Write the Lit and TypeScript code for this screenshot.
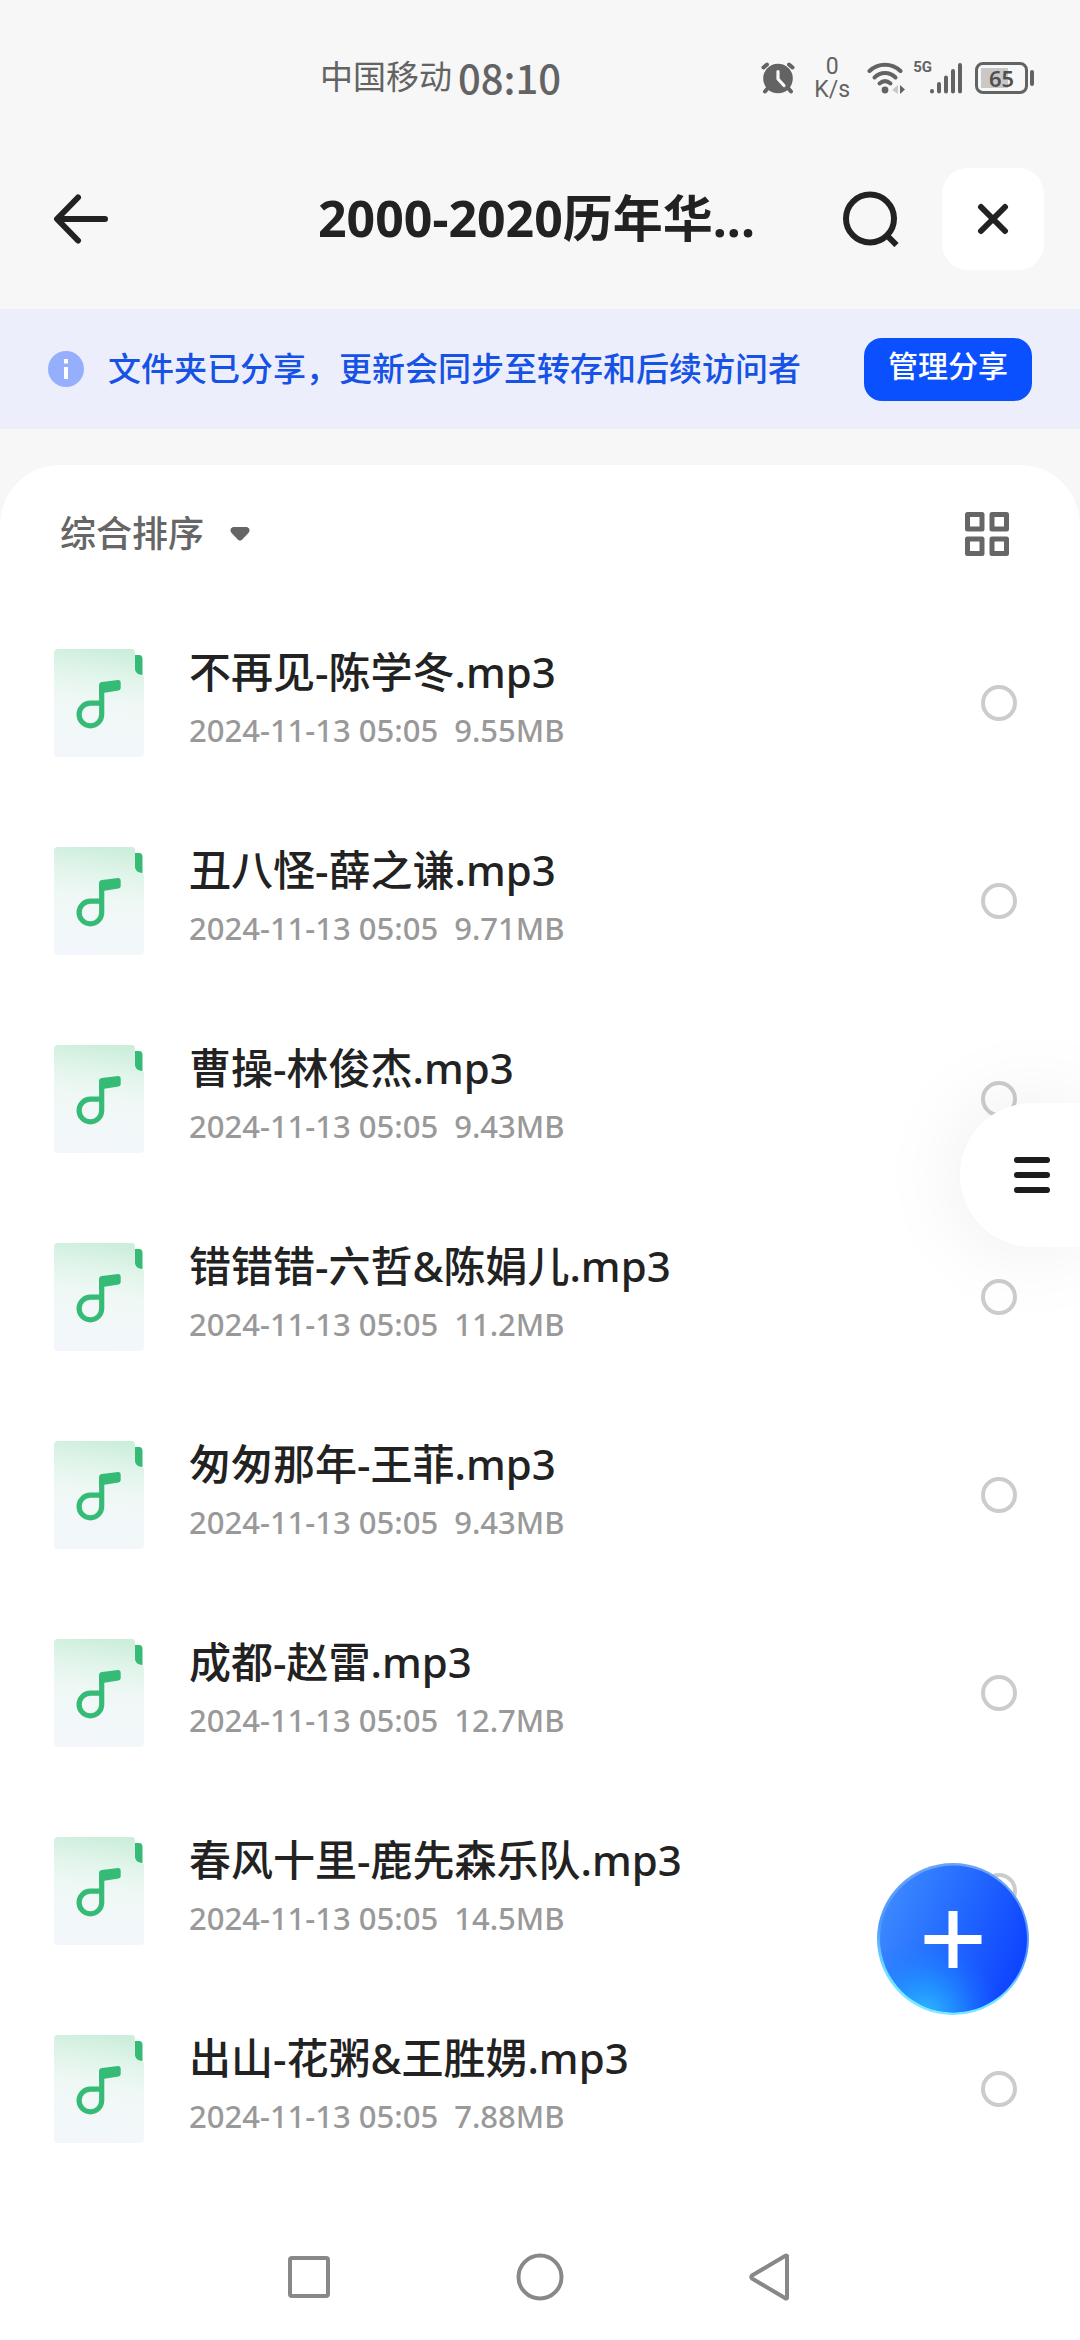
import { LitElement, html, css } from "lit";
import { customElement, property } from "lit/decorators.js";

interface Track {
  name: string;
  date: string;
  size: string;
}

const TRACKS: Track[] = [
  { name: "不再见-陈学冬.mp3", date: "2024-11-13 05:05", size: "9.55MB" },
  { name: "丑八怪-薛之谦.mp3", date: "2024-11-13 05:05", size: "9.71MB" },
  { name: "曹操-林俊杰.mp3", date: "2024-11-13 05:05", size: "9.43MB" },
  { name: "错错错-六哲&陈娟儿.mp3", date: "2024-11-13 05:05", size: "11.2MB" },
  { name: "匆匆那年-王菲.mp3", date: "2024-11-13 05:05", size: "9.43MB" },
  { name: "成都-赵雷.mp3", date: "2024-11-13 05:05", size: "12.7MB" },
  { name: "春风十里-鹿先森乐队.mp3", date: "2024-11-13 05:05", size: "14.5MB" },
  { name: "出山-花粥&王胜娚.mp3", date: "2024-11-13 05:05", size: "7.88MB" },
];

const shared = css`
  * {
    box-sizing: border-box;
  }
  svg {
    display: block;
    flex: none;
  }
  button {
    display: flex;
    align-items: center;
    justify-content: center;
    margin: 0;
    padding: 0;
    border: 0;
    background: none;
    color: inherit;
    font: inherit;
  }
`;

@customElement("status-bar")
export class StatusBar extends LitElement {
  static styles = [
    shared,
    css`
      :host {
        display: flex;
        align-items: center;
        height: 129px;
        padding: 27px 46px 0 320px;
        color: #636363;
      }
      .left {
        display: flex;
        align-items: center;
        gap: 6px;
        padding-bottom: 2px;
        line-height: 40px;
      }
      .carrier {
        font-size: 33px;
      }
      .clock {
        font-family: "Noto Sans CJK SC", sans-serif;
        font-size: 40px;
        font-weight: 500;
      }
      .icons {
        display: flex;
        align-items: center;
        margin-left: auto;
      }
      .speed {
        display: flex;
        flex-direction: column;
        align-items: center;
        width: 36px;
        margin: 0 17px 0 19px;
        font-family: Roboto, sans-serif;
        font-size: 23px;
        line-height: 23px;
      }
      .network {
        align-self: flex-start;
        margin: 0 -3px 0 8px;
        font-family: Roboto, sans-serif;
        font-size: 15px;
        font-weight: 700;
        line-height: 24px;
      }
      .battery {
        display: flex;
        align-items: center;
        justify-content: center;
        width: 53px;
        height: 32px;
        margin-left: 12px;
        border: 3px solid #636363;
        border-radius: 8px;
        background: linear-gradient(#c8c8c8, #c8c8c8) 3px center / 27px 20px no-repeat;
        color: #505050;
        font-size: 22px;
        font-weight: 600;
        line-height: 26px;
      }
      .knob {
        width: 4px;
        height: 16px;
        margin-left: 2px;
        border-radius: 2px;
        background: #636363;
      }
    `,
  ];

  render() {
    return html`
      <div class="left"><span class="carrier">中国移动</span><span class="clock">08:10</span></div>
      <div class="icons">
        <svg width="34" height="32" viewBox="0 0 34 32" aria-hidden="true">
          <path d="M2.500 5.500 L6 2.500 M31.500 5.500 L28 2.500 M7 26 L4 29.500 M27 26 L30 29.500" stroke="#636363" stroke-width="4" stroke-linecap="round" />
          <circle cx="17" cy="16.500" r="14.800" fill="#636363" />
          <path d="M17 9.500 V17 L23 23.500" fill="none" stroke="#f7f7f7" stroke-width="3.200" stroke-linecap="round" stroke-linejoin="round" />
        </svg>
        <div class="speed"><span>0</span><span>K/s</span></div>
        <svg width="38" height="32" viewBox="0 0 38 32" aria-hidden="true">
          <g fill="none" stroke="#636363" stroke-width="4" stroke-linecap="round">
            <path d="M2.500 9 C11 0.500 25 0.500 33.500 9" />
            <path d="M7.500 15.500 C13.500 9.500 22.500 9.500 28.500 15.500" />
            <path d="M12.500 21.500 C16 18.500 20 18.500 23.500 21.500" />
          </g>
          <circle cx="18" cy="28" r="3.400" fill="#636363" />
          <path d="M31 23 V32 L25 28 Z" fill="#c8c8c8" />
          <path d="M33 23 V32 L38 27.500 Z" fill="#636363" />
        </svg>
        <span class="network">5G</span>
        <svg width="34" height="32" viewBox="0 0 34 32" aria-hidden="true">
          <path d="M3 29 V29.500 M10 22 V29.500 M17 15.500 V29.500 M24 9 V29.500 M31 3 V29.500" stroke="#636363" stroke-width="4" stroke-linecap="round" />
        </svg>
        <div class="battery">65</div>
        <div class="knob"></div>
      </div>
    `;
  }
}

@customElement("track-row")
export class TrackRow extends LitElement {
  @property({ attribute: false }) track!: Track;

  static styles = [
    shared,
    css`
      :host {
        display: block;
      }
      .row {
        display: flex;
        align-items: center;
        height: 198px;
        padding: 0 63px 0 54px;
      }
      .text {
        flex: 1;
        min-width: 0;
        margin-left: 45px;
        padding-bottom: 6px;
      }
      .name {
        color: #222;
        font-size: 42px;
        font-weight: 500;
        line-height: 60px;
        white-space: nowrap;
      }
      .meta {
        display: flex;
        gap: 16px;
        color: #999;
        font-size: 31px;
        font-weight: 500;
        line-height: 56px;
        white-space: nowrap;
      }
      .tick {
        flex: none;
        width: 36px;
        height: 36px;
        margin: 0;
        border: 4px solid #ccc;
        border-radius: 50%;
        background: #fff;
        appearance: none;
      }
      .tick:checked {
        border-color: #0a50ff;
        background: #0a50ff;
      }
    `,
  ];

  render() {
    const { name, date, size } = this.track;
    return html`
      <label class="row">
        <svg width="90" height="108" viewBox="0 0 90 108" aria-hidden="true">
          <defs>
            <linearGradient id="sheet" x1="0.560" y1="0" x2="0.440" y2="1">
              <stop offset="0" stop-color="#cceedb" />
              <stop offset="0.250" stop-color="#e2f5eb" />
              <stop offset="0.500" stop-color="#f0f8f6" />
              <stop offset="1" stop-color="#f3f7fb" />
            </linearGradient>
          </defs>
          <path d="M4 0 H78 Q81 0 81 4 V20 Q81 26 88 26 Q90 26 90 29 V104 Q90 108 86 108 H4 Q0 108 0 104 V4 Q0 0 4 0 Z" fill="url(#sheet)" />
          <path d="M81 6 H85 Q88.500 6 88.500 10 V26 Q81 25.500 81 20 Z" fill="#35bb76" />
          <path d="M47.700 36 V65.500 A11.300 11.300 0 1 1 36.400 54.200 H47.700" fill="none" stroke="#35bb76" stroke-width="5.200" />
          <path d="M45.100 36 Q45.100 33.300 48 33 L64 31 Q66.700 30.700 66.700 33.500 V39 Q66.700 41.200 64.500 41.500 L50.300 43.700 L45.100 46 Z" fill="#35bb76" />
        </svg>
        <div class="text">
          <div class="name">${name}</div>
          <div class="meta"><span>${date}</span><span>${size}</span></div>
        </div>
        <input class="tick" type="checkbox" />
      </label>
    `;
  }
}

@customElement("app-root")
export class AppRoot extends LitElement {
  static styles = [
    shared,
    css`
      :host {
        display: block;
        position: relative;
        overflow: hidden;
        min-height: 100vh;
        background: #f7f7f7;
        color: #222;
        font-family: "Noto Sans", "Noto Sans CJK SC", sans-serif;
      }
      .header {
        display: flex;
        align-items: center;
        height: 180px;
        padding: 0 36px 0 54px;
      }
      .title {
        flex: 1;
        margin: 0;
        overflow: hidden;
        padding: 0 0 2px 122px;
        font-size: 50px;
        font-weight: 700;
        line-height: 72px;
        text-align: center;
        white-space: nowrap;
      }
      .close {
        width: 102px;
        height: 102px;
        margin-left: 43px;
        border-radius: 26px;
        background: #fff;
      }
      .banner {
        display: flex;
        align-items: center;
        height: 120px;
        padding: 0 48px;
        background: #eceefb;
      }
      .notice {
        flex: 1;
        margin: 0 0 0 24px;
        color: #1652e6;
        font-size: 33px;
        font-weight: 500;
        line-height: 48px;
        white-space: nowrap;
      }
      .manage {
        width: 168px;
        height: 63px;
        padding-bottom: 6px;
        border-radius: 18px;
        background: #0a50ff;
        color: #fff;
        font-size: 30px;
        font-weight: 500;
        line-height: 44px;
      }
      .sheet {
        margin-top: 36px;
        border-radius: 60px 60px 0 0;
        background: #fff;
      }
      .tools {
        display: flex;
        align-items: center;
        justify-content: space-between;
        height: 139px;
        padding: 0 71px 2px 60px;
      }
      .sort {
        gap: 26px;
        color: #666;
        font-size: 36px;
        font-weight: 500;
        line-height: 52px;
      }
      .list {
        margin: 0;
        padding: 0;
        list-style: none;
      }
      .nav {
        display: grid;
        grid-template-columns: repeat(3, 231px);
        justify-content: center;
        height: 152px;
        padding-top: 26px;
      }
      .menu {
        position: absolute;
        top: 1103px;
        right: 0;
        width: 120px;
        height: 144px;
        padding-left: 24px;
        border-radius: 72px 0 0 72px;
        background: #fff;
        box-shadow: 0 0 90px rgba(0, 0, 0, 0.08);
      }
      .add {
        position: absolute;
        right: 51px;
        bottom: 325px;
      }
    `,
  ];

  render() {
    return html`
      <status-bar></status-bar>
      <header class="header">
        <button aria-label="返回">
          <svg width="54" height="50" viewBox="0 0 54 50">
            <path d="M24 3.500 L3 25 L24 46.500 M4 25 H51" fill="none" stroke="#222" stroke-width="6" stroke-linecap="round" stroke-linejoin="round" />
          </svg>
        </button>
        <h1 class="title">2000-2020历年华...</h1>
        <button aria-label="搜索">
          <svg width="56" height="56" viewBox="0 0 56 56">
            <circle cx="27" cy="27.500" r="24" fill="none" stroke="#222" stroke-width="6" />
            <path d="M44 44.500 L53.500 54" stroke="#222" stroke-width="6" />
          </svg>
        </button>
        <button class="close" aria-label="关闭">
          <svg width="32" height="32" viewBox="0 0 32 32">
            <path d="M4 4 L28 28 M28 4 L4 28" stroke="#222" stroke-width="6" stroke-linecap="round" />
          </svg>
        </button>
      </header>
      <section class="banner">
        <svg width="36" height="36" viewBox="0 0 36 36" aria-hidden="true">
          <circle cx="18" cy="18" r="18" fill="#96affc" />
          <path d="M16 8 H20 V12.500 H16 Z M16 16 H20 V28 H16 Z" fill="#fff" />
        </svg>
        <p class="notice">文件夹已分享，更新会同步至转存和后续访问者</p>
        <button class="manage">管理分享</button>
      </section>
      <main class="sheet">
        <div class="tools">
          <button class="sort">
            综合排序
            <svg width="20" height="14" viewBox="0 0 20 14">
              <path d="M3 0 H17 Q20 1 19.500 4 Q19 5.500 17 7.500 L12 12.700 Q10 14.500 8 12.700 L3 7.500 Q1 5.500 0.500 4 Q0 1 3 0 Z" fill="#666" />
            </svg>
          </button>
          <button aria-label="网格视图">
            <svg width="44" height="44" viewBox="0 0 44 44">
              <g fill="none" stroke="#666" stroke-width="5" stroke-linejoin="round">
                <rect x="2.500" y="2.500" width="14.500" height="14.500" />
                <rect x="27" y="2.500" width="14.500" height="14.500" />
                <rect x="2.500" y="27" width="14.500" height="14.500" />
                <rect x="27" y="27" width="14.500" height="14.500" />
              </g>
            </svg>
          </button>
        </div>
        <ul class="list">
          ${TRACKS.map((track) => html`<li><track-row .track=${track}></track-row></li>`)}
        </ul>
        <nav class="nav">
          <button aria-label="最近任务">
            <svg width="48" height="48" viewBox="0 0 48 48">
              <rect x="5" y="5" width="38" height="38" rx="2" fill="none" stroke="#888" stroke-width="4" />
            </svg>
          </button>
          <button aria-label="主屏幕">
            <svg width="48" height="48" viewBox="0 0 48 48">
              <circle cx="24" cy="24" r="21.500" fill="none" stroke="#888" stroke-width="4" />
            </svg>
          </button>
          <button aria-label="返回上一级">
            <svg width="48" height="48" viewBox="0 0 48 48">
              <path d="M40 3 V45 Q39.500 46 38 45 L5 25.500 Q3.500 24 5 22.500 L38 3 Q39.500 2 40 3 Z" fill="none" stroke="#888" stroke-width="4" stroke-linejoin="round" />
            </svg>
          </button>
        </nav>
      </main>
      <button class="menu" aria-label="菜单">
        <svg width="36" height="36" viewBox="0 0 36 36">
          <path d="M3 3 H33 M3 18 H33 M3 33 H33" stroke="#1c1c1c" stroke-width="6" stroke-linecap="round" />
        </svg>
      </button>
      <button class="add" aria-label="添加">
        <svg width="152" height="152" viewBox="0 0 152 152">
          <defs>
            <linearGradient id="disc" x1="0.050" y1="0.300" x2="0.950" y2="0.650">
              <stop offset="0" stop-color="#3a87ff" />
              <stop offset="0.500" stop-color="#2268ff" />
              <stop offset="1" stop-color="#1045ff" />
            </linearGradient>
            <radialGradient id="glow" cx="0.300" cy="1.020" r="0.520">
              <stop offset="0" stop-color="#30bcff" />
              <stop offset="0.400" stop-color="#22a0ff" stop-opacity="0.700" />
              <stop offset="1" stop-color="#1878ff" stop-opacity="0" />
            </radialGradient>
            <linearGradient id="rim" x1="0.600" y1="0" x2="0.400" y2="1">
              <stop offset="0" stop-color="#6ea4f5" />
              <stop offset="0.500" stop-color="#4f97ff" />
              <stop offset="0.800" stop-color="#6fe4ff" />
              <stop offset="1" stop-color="#7beaff" />
            </linearGradient>
          </defs>
          <circle cx="76" cy="76" r="76" fill="url(#rim)" />
          <circle cx="76.500" cy="76" r="73.500" fill="url(#disc)" />
          <circle cx="76.500" cy="76" r="73.500" fill="url(#glow)" />
          <path d="M76 48 V105 M47.500 76.500 H104.500" stroke="#fff" stroke-width="9" />
        </svg>
      </button>
    `;
  }
}
